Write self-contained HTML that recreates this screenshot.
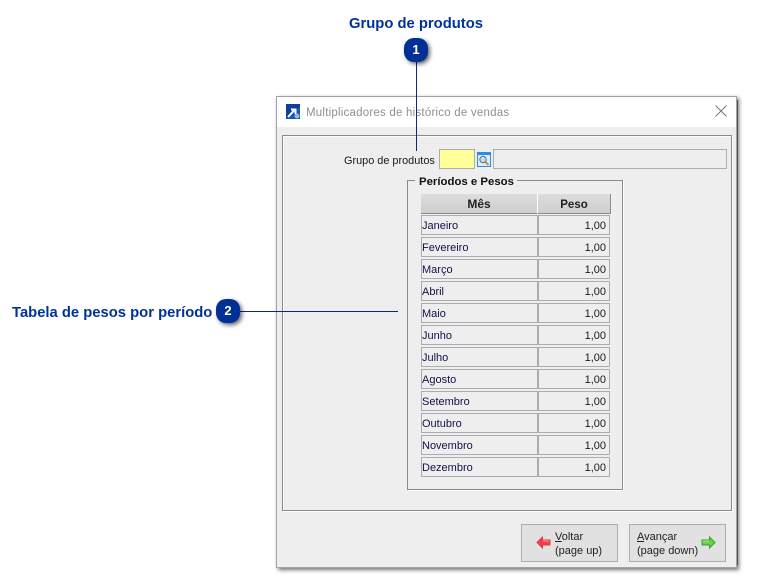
<!DOCTYPE html>
<html lang="pt">
<head>
<meta charset="utf-8">
<title>Multiplicadores de histórico de vendas</title>
<style>
html,body{margin:0;padding:0;background:#fff}
body{position:relative;width:760px;height:584px;overflow:hidden;font-family:"Liberation Sans",sans-serif;font-size:11px;color:#000}
div,span{position:absolute;box-sizing:border-box;white-space:nowrap}
u{text-decoration:underline}
.h{font-weight:bold;font-size:14.8px;color:#003399;line-height:18px}
.badge{width:24px;height:24px;border-radius:10px;background:#002f96;color:#fff;font-weight:bold;font-size:13px;line-height:24px;text-align:center;box-shadow:2px 2px 4px rgba(0,0,0,.6)}
.win{left:276px;top:96px;width:461px;height:472px;background:#eeeeee;border:1px solid #a3a3a3;box-shadow:2px 2px 4px rgba(0,0,0,.55)}
.bar{left:0;top:0;width:459px;height:30px;background:#fff}
.t{font-size:10.9px;line-height:14px;color:#1a1a1a}
.m,.p{height:20px;border:1px solid #acacb0;background:#eeeeee;font-size:11px;line-height:20px;color:#10104a}
.m{left:421px;width:118px;border-right-width:2px;padding-left:0}
.p{left:539px;width:71px;border-left:0;text-align:right;padding-right:3px;color:#1a1a1a}
.btn{top:524px;width:97px;height:38px;background:#e1e1e1;border:1px solid #adadad;font-size:11px;line-height:14px;color:#222}
</style>
</head>
<body>
<div style="left:735px;top:100px;width:3px;height:465px;background:#8a8a8a"></div>
<div style="left:655px;top:563px;width:80px;height:6px;font-size:8px;line-height:6px;color:#333;overflow:hidden">SMI 200 2 ANANA</div>

<div class="h" style="left:349px;top:15px">Grupo de produtos</div>
<div class="h" style="left:12px;top:304px">Tabela de pesos por período</div>

<div class="win"></div>
<div class="bar" style="left:277px;top:97px;width:459px"></div>
<svg style="position:absolute;left:286px;top:104px" width="14" height="15" viewBox="0 0 14 15">
<rect width="14" height="15" fill="#0f3f9c"/>
<path d="M0 15 L14 3 V15Z" fill="#1c55b8"/>
<path d="M2 13 L8 6.5 M5 5.5 H9.5 V10" stroke="#fff" stroke-width="2" fill="none"/>
<circle cx="11" cy="12" r="2.5" fill="#9db6d8"/>
</svg>
<div style="left:306px;top:106px;font-size:11.5px;line-height:14px;color:#8f8f8f;letter-spacing:.22px">Multiplicadores de histórico de vendas</div>
<svg style="position:absolute;left:715px;top:105px" width="12" height="12" viewBox="0 0 12 12"><path d="M.5 .5 L11.5 11.5 M11.5 .5 L.5 11.5" stroke="#777" stroke-width="1" fill="none"/></svg>

<div style="left:282px;top:135px;width:450px;height:376px;border:1px solid #8a8a8a;box-shadow:inset 1px 1px 0 #fff,1px 1px 0 #fff"></div>

<div class="t" style="left:344px;top:154px">Grupo de produtos</div>
<div style="left:439px;top:149px;width:36px;height:20px;background:#ffff99;border:1px solid #adadad"></div>
<svg style="position:absolute;left:477px;top:152px" width="14" height="15" viewBox="0 0 14 15">
<rect x=".5" y=".5" width="13" height="14" fill="#dfeefa" stroke="#2a8fe0"/>
<rect x="1" y="1" width="12" height="2" fill="#2a8fe0"/>
<circle cx="6" cy="7.5" r="3.2" fill="#c5dcec" stroke="#58708a"/>
<path d="M8.5 10 L11.5 13" stroke="#d98a3a" stroke-width="2"/>
</svg>
<div style="left:493px;top:149px;width:234px;height:20px;background:#eeeeee;border:1px solid #adadad"></div>

<div style="left:407px;top:180px;width:216px;height:310px;border:1px solid #8a8a8a;box-shadow:1px 1px 0 #fff"></div>
<div style="left:415px;top:173px;width:102px;height:15px;background:#eeeeee"></div>
<div style="left:419px;top:175px;font-weight:bold;font-size:11.4px;line-height:14px;color:#111">Períodos e Pesos</div>

<div style="left:421px;top:194px;width:117px;height:20px;background:linear-gradient(#dcdcdc,#cfcfcf);border-right:1px solid #fff;border-bottom:1px solid #8c8c8c;font-weight:bold;font-size:12px;line-height:21px;text-align:center;color:#222">Mês</div>
<div style="left:538px;top:194px;width:73px;height:20px;background:linear-gradient(#dcdcdc,#cfcfcf);border-right:1px solid #8c8c8c;border-bottom:1px solid #8c8c8c;font-weight:bold;font-size:11.5px;line-height:22px;text-align:center;color:#222">Peso</div>

<div class="m" style="top:215px">Janeiro</div><div class="p" style="top:215px">1,00</div>
<div class="m" style="top:237px">Fevereiro</div><div class="p" style="top:237px">1,00</div>
<div class="m" style="top:259px">Março</div><div class="p" style="top:259px">1,00</div>
<div class="m" style="top:281px">Abril</div><div class="p" style="top:281px">1,00</div>
<div class="m" style="top:303px">Maio</div><div class="p" style="top:303px">1,00</div>
<div class="m" style="top:325px">Junho</div><div class="p" style="top:325px">1,00</div>
<div class="m" style="top:347px">Julho</div><div class="p" style="top:347px">1,00</div>
<div class="m" style="top:369px">Agosto</div><div class="p" style="top:369px">1,00</div>
<div class="m" style="top:391px">Setembro</div><div class="p" style="top:391px">1,00</div>
<div class="m" style="top:413px">Outubro</div><div class="p" style="top:413px">1,00</div>
<div class="m" style="top:435px">Novembro</div><div class="p" style="top:435px">1,00</div>
<div class="m" style="top:457px">Dezembro</div><div class="p" style="top:457px">1,00</div>

<div class="btn" style="left:521px"><span style="left:33px;top:5px"><u>V</u>oltar<br>(page up)</span></div>
<svg style="position:absolute;left:536px;top:535px" width="15" height="15" viewBox="0 0 15 15"><path d="M1 7.5 L6.5 2 V5 H14 V10 H6.5 V13Z" fill="#fb3a48" stroke="#d0444c" stroke-width="1"/><path d="M7 6 H13" stroke="#ff9aa0"/></svg>
<div class="btn" style="left:629px"><span style="left:7px;top:5px"><u>A</u>vançar<br>(page down)</span></div>
<svg style="position:absolute;left:701px;top:535px" width="15" height="15" viewBox="0 0 15 15"><path d="M14 7.5 L8.5 2 V5 H1 V10 H8.5 V13Z" fill="#62d840" stroke="#3d9a3a" stroke-width="1"/><path d="M2 6 H8" stroke="#b6f09a"/></svg>

<div style="left:416px;top:60px;width:1px;height:91px;background:#0a2a80"></div>
<div style="left:238px;top:311px;width:160px;height:1px;background:#0a2a70"></div>
<div class="badge" style="left:404px;top:38px">1</div>
<div class="badge" style="left:216px;top:299px">2</div>
</body>
</html>
